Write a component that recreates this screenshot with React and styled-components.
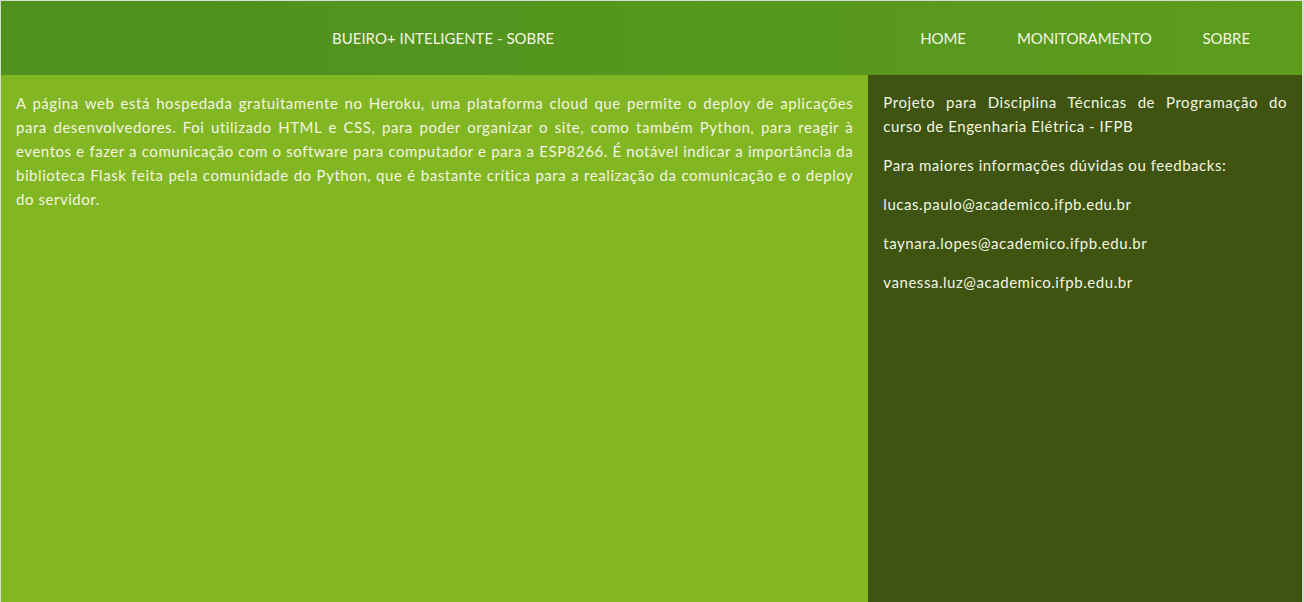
import styled, { createGlobalStyle } from "styled-components";

/////////////////////////////style/////////////////////////////
const GlobalStyle = createGlobalStyle`
  html, body {
    margin: 0;
    padding: 0;
    background-color: #d6dccf;
  }
  * {
    box-sizing: border-box;
  }
`;

const Page = styled.div`
  display: flex;
  flex-direction: column;
  height: 100vh;
  margin: 1px 2px 0 1px;
  font-family: Lato, "Open Sans", sans-serif;
  font-size: 15px;
  color: #f3f5e2;
`;

const Header = styled.header`
  display: grid;
  grid-template-columns: 2fr 1fr;
  align-items: center;
  height: 74px;
  background: linear-gradient(90deg, #4f901f, #5c9c1d);
`;

const Title = styled.div`
  text-align: center;
  padding-left: 17px;
`;

const Nav = styled.nav`
  display: flex;
  justify-content: flex-end;
  gap: 51px;
  padding-right: 52px;
`;

const NavLink = styled.a`
  color: inherit;
  text-decoration: none;
  letter-spacing: -0.1px;
`;

const Content = styled.main`
  flex: 1;
  display: grid;
  grid-template-columns: 2fr 1fr;
`;

const Section = styled.section`
  padding: ${(p) => (p.$dark ? "15px 15px 15px 15px" : "16px 15px 16px 15px")};
  background-color: ${(p) => (p.$dark ? "#3e5410" : "#83b623")};
  line-height: 24px;
  letter-spacing: 0.55px;
`;

const Text = styled.p`
  margin: 0 0 15px;
  text-align: ${(p) => (p.$justify ? "justify" : "left")};
`;

function App() {
  const emails = [
    "lucas.paulo@academico.ifpb.edu.br",
    "taynara.lopes@academico.ifpb.edu.br",
    "vanessa.luz@academico.ifpb.edu.br",
  ];

  return (
    <Page>
      <GlobalStyle />
      <Header>
        <Title>BUEIRO+ INTELIGENTE - SOBRE</Title>
        <Nav>
          <NavLink href="#">HOME</NavLink>
          <NavLink href="#">MONITORAMENTO</NavLink>
          <NavLink href="#">SOBRE</NavLink>
        </Nav>
      </Header>
      <Content>
        <Section>
          <Text $justify>
            A página web está hospedada gratuitamente no Heroku, uma plataforma
            cloud que permite o deploy de aplicações para desenvolvedores. Foi
            utilizado HTML e CSS, para poder organizar o site, como também
            Python, para reagir à eventos e fazer a comunicação com o software
            para computador e para a ESP8266. É notável indicar a importância da
            biblioteca Flask feita pela comunidade do Python, que é bastante
            crítica para a realização da comunicação e o deploy do servidor.
          </Text>
        </Section>
        <Section $dark>
          <Text $justify>
            Projeto para Disciplina Técnicas de Programação do curso de
            Engenharia Elétrica - IFPB
          </Text>
          <Text>Para maiores informações dúvidas ou feedbacks:</Text>
          {emails.map((mail) => (
            <Text key={mail}>{mail}</Text>
          ))}
        </Section>
      </Content>
    </Page>
  );
}

export default App;
